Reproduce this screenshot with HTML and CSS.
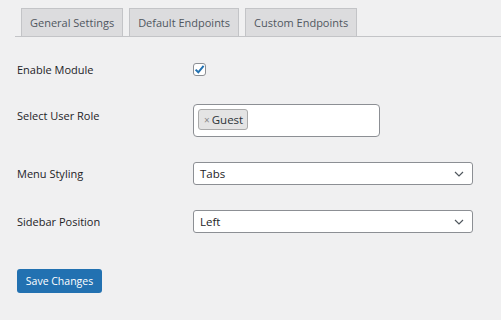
FILE: index.html
```html
<!DOCTYPE html>
<html lang="en">
<head>
    <meta charset="UTF-8">
    <meta name="viewport" content="width=device-width, initial-scale=1.0">
    <title>Settings</title>
    <link rel="stylesheet" href="styles.css">
</head>
<body>
    <div class="tabs">
        <a class="tab" href="#">General Settings</a>
        <a class="tab" href="#">Default Endpoints</a>
        <a class="tab" href="#">Custom Endpoints</a>
    </div>

    <div class="form">
        <div class="row row-check">
            <div class="label">Enable Module</div>
            <div class="field">
                <span class="checkbox">
                    <svg width="11" height="11" viewBox="0 0 11 11"><path d="M1.6 5.6 L4.3 8.3 L9.6 1.8" fill="none" stroke="#2271b1" stroke-width="2"/></svg>
                </span>
            </div>
        </div>

        <div class="row row-role">
            <div class="label">Select User Role</div>
            <div class="field">
                <div class="multi">
                    <span class="chip"><span class="chip-x">×</span>Guest</span>
                </div>
            </div>
        </div>

        <div class="row row-select">
            <div class="label">Menu Styling</div>
            <div class="field">
                <div class="select">
                    <span>Tabs</span>
                    <svg width="10" height="6" viewBox="0 0 10 6"><path d="M1 1 L5 5 L9 1" fill="none" stroke="#50575e" stroke-width="1.2"/></svg>
                </div>
            </div>
        </div>

        <div class="row row-select">
            <div class="label">Sidebar Position</div>
            <div class="field">
                <div class="select">
                    <span>Left</span>
                    <svg width="10" height="6" viewBox="0 0 10 6"><path d="M1 1 L5 5 L9 1" fill="none" stroke="#50575e" stroke-width="1.2"/></svg>
                </div>
            </div>
        </div>

        <button class="save">Save Changes</button>
    </div>
</body>
</html>
```

FILE: styles.css
```css
body {
    margin: 0;
    background: #f0f0f1;
    font-family: "Open Sans", "Liberation Sans", sans-serif;
    font-size: 11px;
    color: #1d2327;
}

.tabs {
    display: flex;
    gap: 6px;
    margin: 8px 0 0 15px;
    padding-left: 6px;
    border-bottom: 1px solid #c3c4c7;
}

.tab {
    display: flex;
    align-items: center;
    height: 27px;
    padding: 0 8px;
    border: 1px solid #c3c4c7;
    border-bottom: none;
    background: #dcdcde;
    color: #50575e;
    text-decoration: none;
    font-size: 11px;
}

.form {
    padding: 0 0 0 17px;
}

.row {
    display: flex;
}

.label {
    width: 176px;
    flex-shrink: 0;
}

.row-check {
    margin-top: 25px;
    height: 14px;
    align-items: center;
}

.checkbox {
    display: flex;
    align-items: center;
    justify-content: center;
    width: 11px;
    height: 11px;
    border: 1px solid #8c8f94;
    border-radius: 3px;
    background: #fff;
}

.row-role {
    margin-top: 28px;
}

.row-role .label {
    padding-top: 4px;
}

.multi {
    width: 177px;
    height: 23px;
    padding: 4px;
    border: 1px solid #8c8f94;
    border-radius: 4px;
    background: #fff;
}

.chip {
    display: inline-flex;
    align-items: center;
    height: 19px;
    padding: 0 4px 0 5px;
    border: 1px solid #aaa;
    border-radius: 3px;
    background: #e4e4e4;
    color: #2c3338;
    font-size: 11.5px;
}

.chip-x {
    color: #888;
    margin-right: 2px;
    font-size: 10px;
}

.row-select {
    align-items: center;
    margin-top: 25px;
}

.select {
    display: flex;
    align-items: center;
    justify-content: space-between;
    width: 264px;
    height: 21px;
    padding: 0 8px 0 6px;
    border: 1px solid #8c8f94;
    border-radius: 3px;
    background: #fff;
    color: #1d2327;
    font-size: 11.5px;
}

.save {
    display: block;
    margin-top: 36px;
    width: 85px;
    height: 24px;
    padding: 0;
    border: none;
    border-radius: 3px;
    background: #2271b1;
    color: #fff;
    font-family: "Open Sans", "Liberation Sans", sans-serif;
    font-size: 10.5px;
}
```
